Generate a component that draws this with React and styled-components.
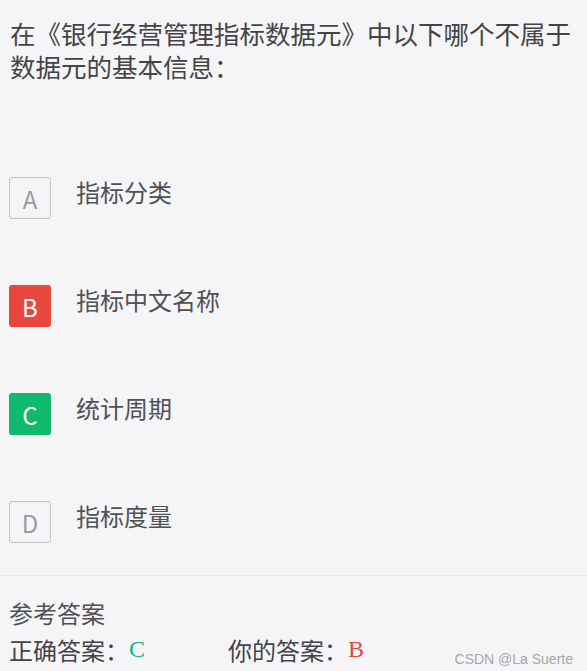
import React from 'react'
import styled, {createGlobalStyle} from "styled-components";

const GlobalStyle = createGlobalStyle`
    html, body{
        margin: 0;
        padding: 0;
        background: #f5f5f7;
    }
    body{
        font-family: "Noto Sans CJK SC", "Noto Sans", sans-serif;
    }
`;

const options = [
    {key: "A", text: "指标分类", state: "plain"},
    {key: "B", text: "指标中文名称", state: "wrong"},
    {key: "C", text: "统计周期", state: "right"},
    {key: "D", text: "指标度量", state: "plain"},
];

function App() {
  return (
    <Page>
        <GlobalStyle />
        <Question>在《银行经营管理指标数据元》中以下哪个不属于数据元的基本信息：</Question>
        <OptionList>
            {options.map((opt)=>(
                <Option key={opt.key}>
                    <Letter state={opt.state}>{opt.key}</Letter>
                    <OptionText>{opt.text}</OptionText>
                </Option>
            ))}
        </OptionList>
        <Footer>
            <Label>参考答案</Label>
            <AnswerRow>
                <Answer>正确答案：<Mark color="#13b573">C</Mark></Answer>
                <Answer>你的答案：<Mark color="#e8473e">B</Mark></Answer>
            </AnswerRow>
        </Footer>
        <Watermark>CSDN @La Suerte</Watermark>
    </Page>
  )
}

const Page = styled.div`
    width: 587px;
    height: 671px;
    overflow: hidden;
    position: relative;
    background: #f5f5f7;
`;

const Question = styled.div`
    padding: 16px 10px 0 10px;
    font-size: 25.5px;
    line-height: 33px;
    color: #444448;
`;

const OptionList = styled.div`
    display: flex;
    flex-direction: column;
    gap: 66px;
    padding: 95px 0 0 9px;
`;

const Option = styled.div`
    display: flex;
    align-items: flex-start;
`;

const Letter = styled.div`
    width: 42px;
    height: 42px;
    box-sizing: border-box;
    border-radius: 3px;
    display: flex;
    align-items: center;
    justify-content: center;
    font-size: 24px;
    border: 1px solid ${p => p.state === "plain" ? "#c3c3c8" : "transparent"};
    background: ${p => p.state === "wrong" ? "#e8473e" : p.state === "right" ? "#0fba6c" : "transparent"};
    color: ${p => p.state === "plain" ? "#9a9aa0" : "#ffffff"};
`;

const OptionText = styled.div`
    margin-left: 25px;
    margin-top: -2px;
    font-size: 24px;
    line-height: 34px;
    color: #505055;
`;

const Footer = styled.div`
    margin-top: 32px;
    border-top: 1px solid #e4e4ea;
    padding: 19px 9px 0 9px;
`;

const Label = styled.div`
    font-size: 24px;
    line-height: 36px;
    color: #505055;
`;

const AnswerRow = styled.div`
    display: flex;
    margin-top: 2px;
`;

const Answer = styled.div`
    width: 219px;
    font-size: 24px;
    line-height: 34px;
    color: #444448;
`;

const Mark = styled.span`
    font-family: "Liberation Serif", serif;
    font-size: 24px;
    color: ${p => p.color};
    position: relative;
    top: -3px;
`;

const Watermark = styled.div`
    position: absolute;
    right: 14px;
    bottom: 4px;
    font-family: "Liberation Sans", sans-serif;
    font-size: 14px;
    line-height: 16px;
    color: #a6a6aa;
`;

export default App
